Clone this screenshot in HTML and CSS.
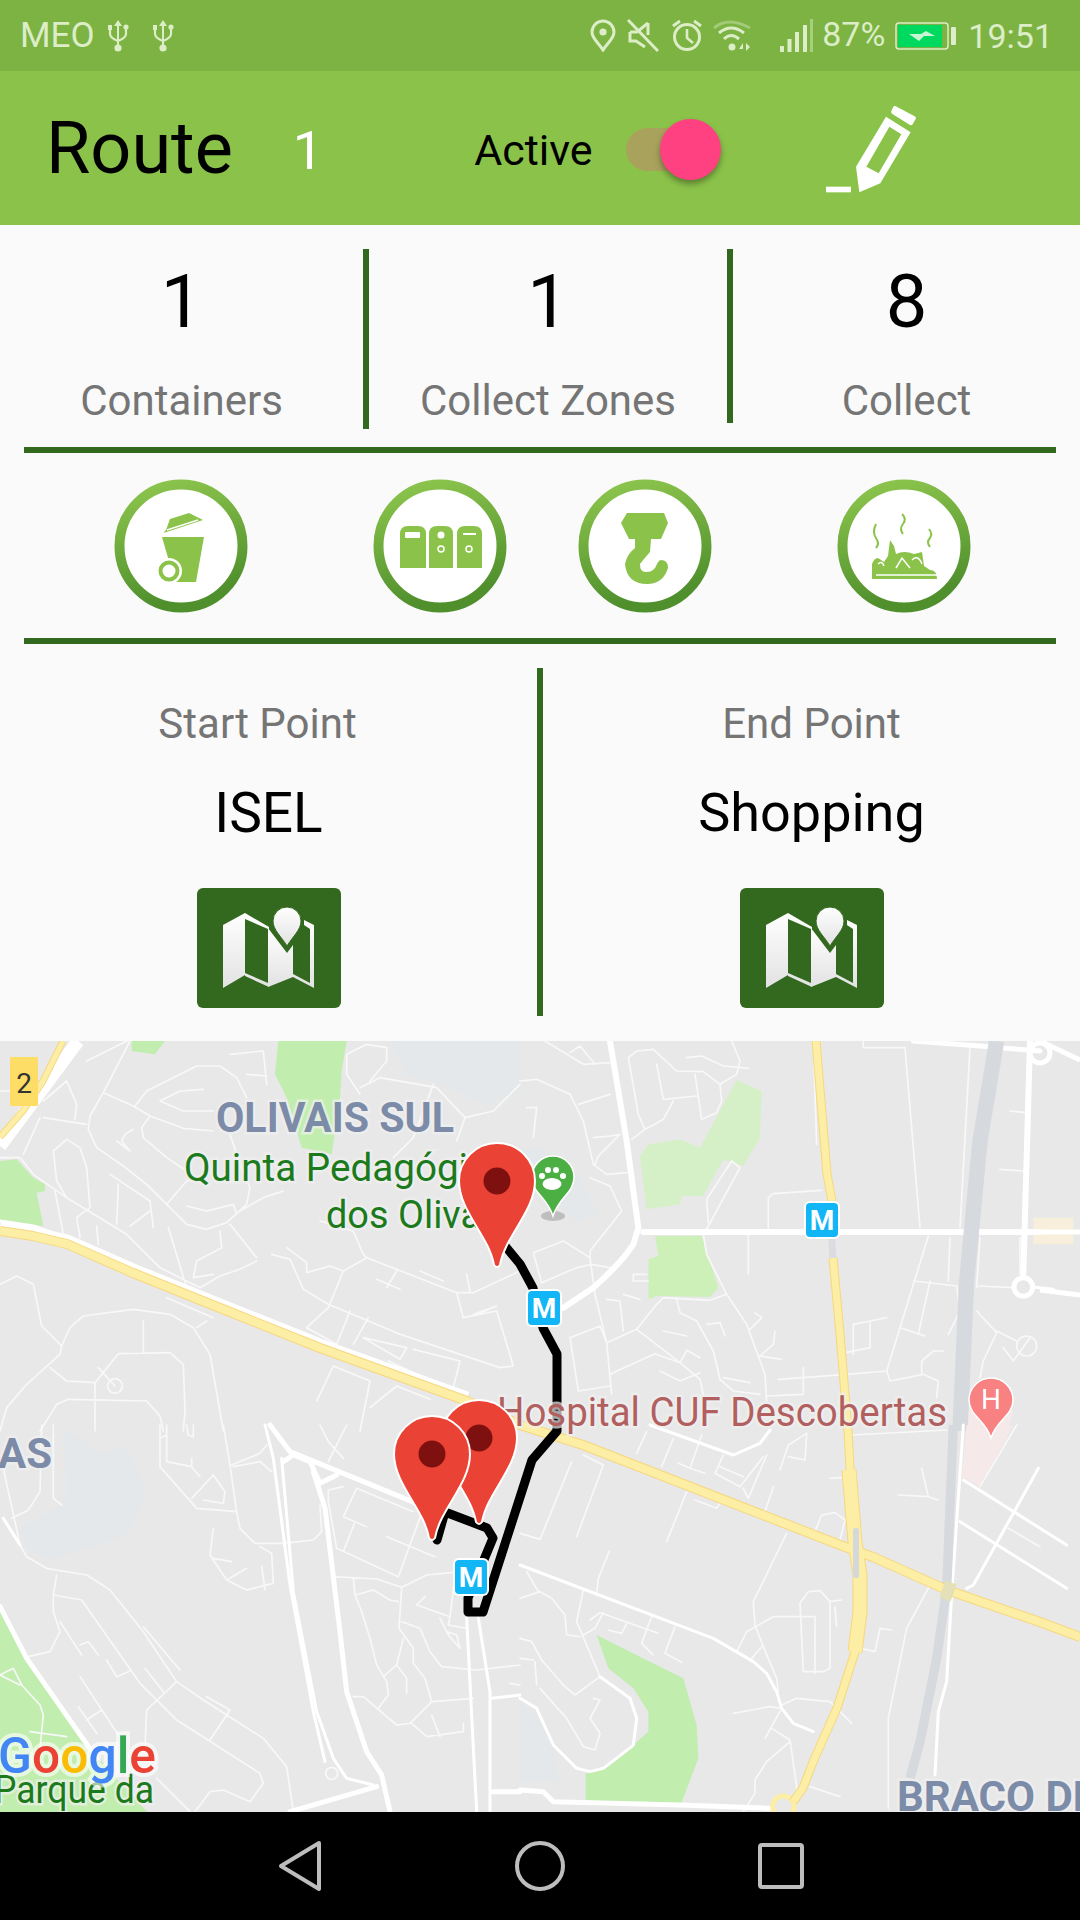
FILE: index.html
```html
<!DOCTYPE html>
<html lang="en">
<head>
<meta charset="utf-8">
<title>Route</title>
<link rel="stylesheet" href="styles.css">
</head>
<body>
<svg class="defs" width="0" height="0" aria-hidden="true">
  <defs>
    <linearGradient id="ring" x1="0" y1="0" x2="0.25" y2="1">
      <stop offset="0" stop-color="#8fc74e"/>
      <stop offset="1" stop-color="#4f8f2c"/>
    </linearGradient>
    <linearGradient id="paper" x1="0" y1="0" x2="0" y2="1">
      <stop offset="0" stop-color="#ffffff"/>
      <stop offset="1" stop-color="#e2e2e2"/>
    </linearGradient>
    <symbol id="usb" viewBox="0 0 24 34">
      <path d="M12 1l4 6h-3v19h-2V7H8z" fill="currentColor"/>
      <circle cx="12" cy="29" r="3.6" fill="currentColor"/>
      <path d="M4 8v7q0 4 8 7q8-3 8-7V8" fill="none" stroke="currentColor" stroke-width="2.2"/>
      <rect x="2" y="6" width="4" height="5" fill="currentColor"/>
      <circle cx="20" cy="8" r="2.6" fill="currentColor"/>
    </symbol>
    <symbol id="map-icon" viewBox="0 0 144 120">
      <path fill="url(#paper)" d="M26 37L48 25V87L26 100Z"/>
      <path fill="url(#paper)" d="M48 25L72 39V99L48 88Z"/>
      <path fill="#33691e" d="M48 31L71 41V95L48 85Z"/>
      <path fill="url(#paper)" d="M71 40L90 65L96 57V89L71 99Z"/>
      <path fill="url(#paper)" d="M107 32L117 37V100L96 89V86L113 95V41L107 37Z"/>
      <path fill="url(#paper)" d="M90 19A14 14 0 0 1 104 33C104 42 96 48 90 58C84 48 76 42 76 33A14 14 0 0 1 90 19Z" stroke="#33691e" stroke-width="1"/>
    </symbol>
    <g id="pin">
      <path d="M0-38C21-38 38-21 38 0C38 30 8 55 3 84Q0 88-3 84C-8 55-38 30-38 0C-38-21-21-38 0-38Z" fill="#ea4335" stroke="#fff" stroke-width="2"/>
      <circle r="13.5" fill="#7f1010"/>
    </g>
    <g id="metro">
      <rect x="-18" y="-19" width="36" height="38" rx="6" fill="#fff"/>
      <rect x="-16" y="-17" width="32" height="34" rx="4" fill="#12b5f5"/>
      <text class="metro-label" y="10" text-anchor="middle">M</text>
    </g>
  </defs>
</svg>

<div class="screen">
  <div class="status">
    <span class="status-text meo">MEO</span>
    <svg class="usb usb-first"><use href="#usb"/></svg>
    <svg class="usb usb-second"><use href="#usb"/></svg>
    <span class="status-spacer"></span>
    <svg class="s-icon s-loc" viewBox="0 0 26 33"><path d="M13 2a11 11 0 0 1 11 11c0 7-7 11-11 18C9 24 2 20 2 13A11 11 0 0 1 13 2Z" fill="none" stroke="currentColor" stroke-width="3"/><circle cx="13" cy="13" r="3.600" fill="currentColor"/></svg>
    <svg class="s-icon s-mute" viewBox="0 0 32 33"><path d="M3 13h7L21 4M3 13v9h6l9 6" fill="none" stroke="currentColor" stroke-width="3"/><path d="M21 4v12" stroke="currentColor" stroke-width="3"/><path d="M1 1l30 31" stroke="currentColor" stroke-width="3"/></svg>
    <svg class="s-icon s-alarm" viewBox="0 0 32 33"><circle cx="16" cy="18" r="12.500" fill="none" stroke="currentColor" stroke-width="3"/><path d="M16 10v9l6 5" fill="none" stroke="currentColor" stroke-width="2.600"/><path d="M2 7l7-5M30 7l-7-5" stroke="currentColor" stroke-width="3"/></svg>
    <svg class="s-icon s-wifi" viewBox="0 0 39 33"><path d="M1 9Q15-3 37 9" fill="none" stroke="currentColor" stroke-width="3" opacity=".4"/><path d="M6 14Q18 4 31 14" fill="none" stroke="currentColor" stroke-width="3"/><path d="M11 20Q18 13 26 20" fill="none" stroke="currentColor" stroke-width="3"/><circle cx="19" cy="28" r="3.500" fill="currentColor"/><path d="M30 24l-4 6h4ZM33 24v8l4-4Z" fill="currentColor"/></svg>
    <svg class="s-icon s-signal" viewBox="0 0 33 33"><path d="M0 27h4v6H0ZM7.500 20h4v13h-4ZM15 13h4v20h-4ZM23 6h4v27h-4Z" fill="currentColor"/><path d="M30 0h3v33h-3Z" fill="currentColor" opacity=".45"/></svg>
    <span class="status-text pct">87%</span>
    <svg class="s-icon s-batt" viewBox="0 0 61 28"><rect x="1" y="1" width="52" height="26" rx="3" fill="none" stroke="currentColor" stroke-width="1.500"/><rect x="3" y="3" width="44" height="22" fill="#00d95f"/><rect x="56" y="5" width="5" height="18" rx="1" fill="currentColor"/><path d="M14 12h12l5-3l9 5H29l-5 5Z" fill="#c6f6d4"/></svg>
    <span class="status-text time">19:51</span>
  </div>

  <header class="appbar">
    <h1 class="title">Route</h1>
    <span class="route-no">1</span>
    <span class="active-label">Active</span>
    <span class="switch"><span class="thumb"></span></span>
    <svg class="pencil" viewBox="0 0 360 330">
      <path d="M42 275H117V292H42Z" fill="#fff"/>
      <path fill="#fff" fill-rule="evenodd" d="M222 65L296 112L205 265L142 292L132 215ZM232 95L163 215L200 235L268 118Z"/>
      <path fill="#fff" d="M250 33L308 64Q314 68 311 72L302 88Q298 92 294 90L240 56Q236 52 238 48L244 35Q246 32 250 33Z"/>
    </svg>
  </header>

  <section class="stats">
    <div class="stat">
      <div class="stat-value">1</div>
      <div class="stat-label">Containers</div>
    </div>
    <div class="vline vline-a"></div>
    <div class="stat">
      <div class="stat-value">1</div>
      <div class="stat-label">Collect Zones</div>
    </div>
    <div class="vline vline-b"></div>
    <div class="stat">
      <div class="stat-value">8</div>
      <div class="stat-label">Collect</div>
    </div>
  </section>

  <div class="rule"></div>

  <section class="actions">
    <svg class="round round-bin" viewBox="-67 -67 134 134">
      <circle r="61.500" fill="#fff" stroke="url(#ring)" stroke-width="10"/>
      <path fill="#8bc34a" d="M-17.500-13L22-26L8-33L-11-27L-15-16Z"/>
      <path stroke="#fff" stroke-width="1.500" d="M-14-16L17-26"/>
      <path fill="#8bc34a" d="M-19-9H23L15 36H-6Z"/>
      <circle cx="-12" cy="25" r="13" fill="#fff"/>
      <circle cx="-12" cy="25" r="8.500" fill="none" stroke="#8bc34a" stroke-width="4"/>
    </svg>
    <svg class="round round-recycle" viewBox="-67 -67 134 134">
      <circle r="61.500" fill="#fff" stroke="url(#ring)" stroke-width="10"/>
      <path fill="#8bc34a" d="M-40 22V-12Q-40-20-32-20H-22Q-14-20-14-12V22Z"/>
      <path fill="#8bc34a" d="M-11 22V-12Q-11-20-3-20H5Q13-20 13-12V22Z"/>
      <path fill="#8bc34a" d="M17 22V-12Q17-20 25-20H34Q42-20 42-12V22Z"/>
      <rect x="-35" y="-14" width="15" height="6" rx="1" fill="#fff"/>
      <ellipse cx="1" cy="-11" rx="3.500" ry="3.500" fill="#fff"/>
      <rect x="23" y="-13" width="13" height="2" fill="#fff"/>
      <circle cx="1" cy="3" r="3" fill="none" stroke="#fff" stroke-width="1.500"/>
      <circle cx="29" cy="3" r="3" fill="none" stroke="#fff" stroke-width="1.500"/>
    </svg>
    <svg class="round round-hook" viewBox="-67 -67 134 134">
      <circle r="61.500" fill="#fff" stroke="url(#ring)" stroke-width="10"/>
      <path fill="#8bc34a" d="M-18-33H19L23-23L16-7H-16L-24-23Z"/>
      <path fill="#8bc34a" d="M-10-7H6L5 6Q-2 14-5 18Q-5 27 2 26Q9 26 12 18Q14 14 16 14Q23 14 23 22Q18 38 2 38Q-18 38-20 18Q-18 8-10 2Z"/>
    </svg>
    <svg class="round round-heap" viewBox="-67 -67 134 134">
      <circle r="61.500" fill="#fff" stroke="url(#ring)" stroke-width="10"/>
      <path fill="#8bc34a" d="M-32 33V18Q-30 12-26 12L-20 16L-16 10L-14-6L-10 0L-8 8Q0 4 10 8L18 6L20 20L26 24Q33 24 33 33Z"/>
      <path fill="none" stroke="#fff" stroke-width="1.500" d="M-26 18Q-22 14-20 20M-8 22L-2 12L6 22M8 14Q14 8 18 18M-28 29H33"/>
      <path fill="none" stroke="#8bc34a" stroke-width="2" d="M-28-22Q-32-14-28-8Q-24-2-28 2M-2-32Q3-27-1-22Q-5-17-1-12M25-17Q29-12 26-8Q22-4 26 1"/>
    </svg>
  </section>

  <div class="rule"></div>

  <section class="points">
    <div class="point">
      <div class="point-label point-label-start">Start Point</div>
      <div class="point-value">ISEL</div>
      <button class="map-btn" type="button"><svg class="map-svg"><use href="#map-icon"/></svg></button>
    </div>
    <div class="vline vline-c"></div>
    <div class="point">
      <div class="point-label">End Point</div>
      <div class="point-value point-value-end">Shopping</div>
      <button class="map-btn" type="button"><svg class="map-svg"><use href="#map-icon"/></svg></button>
    </div>
  </section>

  <svg class="map" viewBox="0 1041 1080 771" preserveAspectRatio="none">
    <rect x="0" y="1041" width="1080" height="771" fill="#e8e8e8"/>

    <!-- north-west quarter -->
    <g transform="translate(0 1041) scale(.33333)">
      <path class="park" d="M395 0H495L465 40L395 30ZM835 0H1040L1025 90L1020 170L995 340L905 320L860 170L825 100ZM0 360L50 355L100 410L135 430V450L110 455L130 555L0 540Z"/>
      <path class="water" d="M1170 0H1560V150L1460 190L1330 135L1220 100Z"/>
      <path class="m5" d="M390 0L310 155L270 225L265 265L290 320L370 375L440 430L520 510L560 550L620 565L680 545L740 490L750 440L720 370L690 280M310 155L400 195L450 225L550 262L640 270M405 195L440 150L590 75L660 75L710 110L740 170M450 225L425 260L430 290L500 350L560 390M480 180L540 150L610 145M480 180L550 210L640 210M0 350L60 350L100 400L200 470L380 580L480 680L600 740L660 705L720 685L770 660M200 470L170 420L160 330L200 295L240 320L260 380L270 500L230 530M165 450L190 580M230 530L240 590M290 555L295 610M0 730L50 705L100 730L125 855L185 915L180 940L80 1030L20 1100L0 1170M185 915L210 860L250 825L400 805L510 820L580 860L630 940L670 1170M150 980L200 1020L285 1025L355 938L510 935L550 970L555 1110L550 1170M430 840V935M120 1170L170 1090L205 1075L440 1080L480 1125L490 1170M295 980L345 1035M285 1025V1170M1100 650L1370 755L1420 755L1560 690M1100 650L1030 690L985 800L920 860L1010 910M815 640L870 655L910 745L985 790L1200 880L1500 980L1540 975L1490 810L1390 830L1370 755M960 540L1060 570L1090 640L1100 650M1010 910L1050 810M1060 910L1105 830M1090 890L1220 920L1200 955L1090 890M1165 960L1380 1060M1240 925L1380 960L1360 1040M950 1080L1000 975L1110 1020L1080 1170M1110 1100L1190 1035L1290 1075M1080 140L1140 110L1310 140L1395 230L1370 300M1395 230L1480 210L1560 130M1080 160L1040 100L1040 40L1100 10L1160 20L1160 60L1110 120M690 40L790 30L800 130M740 100L800 105M500 490L560 420L620 410M560 495L620 510L700 490L710 520M505 560L560 740M660 570L665 620L590 660L580 710L640 700M690 550L770 650M860 620L920 665L920 695L990 675L1030 690M850 450L790 470L720 510M0 150H110M130 230L260 250M120 230L70 340M130 180L200 120L230 190L225 235M260 60L340 20L380 0M350 300L390 330L365 300L375 280L400 265M330 400L450 480L460 560M355 430L350 550M390 555L450 510M1130 715L1200 745M1190 690L1160 740M1260 690L1330 720M1420 825L1490 795L1420 820M1300 130L1240 290L1180 350M500 770L640 830M1400 700L1410 750M590 860L620 840"/>
      <circle class="m5" cx="345" cy="1035" r="22"/>
      <path class="m9" d="M0 540L100 555L280 620"/>
    </g>

    <!-- north-east quarter -->
    <g transform="translate(520 1041) scale(.33333)">
      <path class="park-pale" d="M650 118L725 150L720 290L670 375L610 355L550 465L485 465L480 490L380 505L360 345L385 310L480 295L540 320Z"/>
      <path class="park-mid" d="M405 585H545L595 740L570 768L410 765L385 775V655L415 645Z"/>
      <rect x="1540" y="530" width="120" height="80" fill="#f7efdc"/>
      <path class="water" d="M0 330L60 320L170 400L235 510L170 545L120 500L130 440Z"/>
      <path class="pink" d="M1340 1110H1480L1460 1170H1330Z"/>
      <path class="m5" d="M75 0L190 70L270 65M150 35L180 15L225 70M0 120L50 115L150 160L190 240L220 370L260 400L320 395M175 190L270 160M325 50L350 30L400 25L470 90L550 92L600 130L650 100L660 60L635 0M325 50L355 220L375 265L335 295M600 130L605 180L590 215L545 235L525 100M410 70L430 175L530 165M460 180L430 235L405 250L375 265M500 50L545 45L610 75L685 82M210 410L270 435L305 510L210 630L210 650L130 600L40 635L65 725L170 680L215 670L270 680M210 650L225 760L260 905L275 1060M150 890L240 855L260 905L350 865L410 790L430 770L570 778L620 760M150 890L175 1050L270 1035M350 865L480 965L540 1015L550 1060M270 1000L405 938L480 965L500 928L540 950M470 775L480 815L530 840L580 930L600 1015L640 1050L720 1060M620 760L560 640L550 580L565 555L660 380L635 360L560 475L565 545M620 760L680 850L735 1000L740 1080M745 565V470L760 458L905 448M685 580V700M1225 585L1100 990L980 1000L775 1015M850 980V1060L740 1065M1100 990L1110 1020L1210 1000L1255 1020L1250 1070M1000 940V850L1050 840L1100 830M1050 840V920L975 935M1140 860L1215 885M1230 720L1195 880M1180 720L1310 735L1320 810L1285 880M1155 20L1200 560M1030 0V20L1155 20M1350 20L1320 560M1380 590L1370 740M1375 735L1480 740M1500 590V700M1370 810L1430 875L1390 960L1380 1010M1430 870L1490 900M1450 920L1480 960L1530 890M1205 1000L1205 960L1240 930L1270 930M1470 210L1520 215M1440 385L1510 390M1290 590L1285 720M310 760L360 775M260 775L300 780L310 870M880 0L890 310M220 290L270 285L300 280L235 345L225 370M20 200L50 200L40 290M340 700H380M340 700V720H385M560 850L600 845L615 885M430 870L500 885M420 990L480 1020L540 995M610 1010L690 1025M705 815L725 830L690 865M765 870L760 910L720 945L785 955"/>
      <circle class="m5" cx="1520" cy="915" r="30"/>
      <path class="m18" d="M270 0L320 300L355 560L340 610Q300 670 220 740L130 800"/>
      <path class="m18" d="M370 573H1560"/>
      <path class="m18" d="M1530 0L1510 700"/>
      <path class="m15" d="M1180 0L1380 15L1560 30"/>
      <circle class="m15" cx="1510" cy="738" r="28"/>
      <path class="m9" d="M1535 738L1600 745"/>
      <path class="rail" d="M1430 0L1380 300L1340 720L1320 1170" stroke-width="46"/>
    </g>

    <!-- south-west quarter -->
    <g transform="translate(0 1425) scale(.33333)">
      <path class="park" d="M0 540L90 710L280 980L330 1040L450 1170H0Z"/>
      <path class="water" d="M190 10L320 90L360 60L395 90L440 210L380 330L230 380L150 405L80 370L60 310L180 240L200 200Z"/>
      <path class="m5" d="M125 0L120 200L85 255L35 280M10 130L60 360L80 395L140 430L260 450L330 495L430 620L530 770L610 825L790 940L860 1025L880 1160M170 450L160 510L245 525L420 775L530 885L780 1045L790 1075L750 1130L670 1095L630 1100L585 1160M160 510V560L180 620L150 680L85 695M180 590L245 690M240 660L265 650L295 690M320 705L350 755L390 738M240 755L355 930M235 845L290 925M260 885L305 855M430 605L540 735M530 770L440 855L435 965M435 730L490 800M620 815L690 855L630 945M480 0V125L590 250L710 260L690 120L670 0M500 0V110L575 125M575 100V125L600 155M640 150L575 220M640 150L675 200L670 235L610 225M640 310L630 390L680 465L740 495L820 475L815 385L780 365M640 400L695 410M680 465L740 430M785 425L795 495M700 125L780 110L815 140M695 120L780 85L800 60M710 260L720 310L765 355L850 355L940 345L965 320L960 240M1000 455L1130 462L1205 487L1280 450L1360 442M1205 487L1197 610L1240 670V715L1275 760L1295 830L1230 895L1190 900L1090 815L1060 815M1295 830L1420 820M1030 185L985 195V230L1010 370L1195 455L1270 250M1070 190L1030 275L1100 305M1065 290L1030 380M1160 335L1305 395M1070 190L1240 260M1060 460L1065 510L1085 560L1110 640L1130 720L1160 770L1165 810L1135 850M1065 510L1120 495L1170 525L1195 530M1190 720L1210 640M1150 755L1190 720L1220 760V805M1250 540L1350 575L1370 410M1275 515L1250 540M1350 575L1345 600L1400 610M1205 590L1260 610L1290 680L1325 725L1430 735L1560 720M1320 580L1345 630L1380 670L1370 630L1340 620M1235 895L1280 935L1390 920V895M1295 870L1320 935M0 750L40 730L65 780L120 840L130 870L120 970M0 750L60 780M90 920L200 935M470 1060L570 1160M1530 775L1560 780M160 0V220L185 240M500 30L480 40M560 0L565 30L580 35V0M1040 0L985 110M960 0L985 50L1030 100"/>
      <circle class="m5" cx="995" cy="1045" r="18"/>
      <path class="m9" d="M795 0L820 100L870 480L940 860L975 1010M845 100L880 500L950 860L1000 1000L1040 1060L1120 1080M1400 580L1430 1160M1435 580L1470 800V1160M1475 820L1560 810M10 280L60 360"/>
      <path class="m15" d="M810 0L870 80L1250 235M850 110L880 90L930 110L960 175L1010 150M940 140L975 250L1020 620L1040 800L1100 980L1145 1050L1170 1160M0 545L80 700L290 1000M870 1160L1130 1085M1480 1100H1560"/>
    </g>

    <!-- south-east quarter -->
    <g transform="translate(520 1425) scale(.33333)">
      <path class="park" d="M230 630L360 695L490 760L530 900L535 1000L480 1145L197 1140V1045L240 1035L335 965L385 920V860L340 790L265 730Z"/>
      <path class="water" d="M0 830L40 860L100 960L115 1070H0Z"/>
      <path class="pink" d="M1340 0H1480L1380 185L1325 155Z"/>
      <path class="m5" d="M800 325L700 530L705 600L730 665L770 760L775 800M785 840L830 820L930 830L995 895M640 865L750 845L785 850M785 850L735 940M755 910L810 945L835 1120M810 950L740 1010L705 1065V1105L670 1160M870 1085L960 1115M650 680L680 620L760 575H885V745M840 535L865 500L900 497L930 530V730L910 740H850L840 535M930 530L965 525M945 545L950 605M730 660L695 700M905 270L945 263L975 285L960 345M905 270L885 320M1020 670L1065 680L1080 610L1115 615M1230 480L1160 610L1105 880V1150M0 325L60 343L155 110M250 120L170 335M268 378L235 460L230 505M190 495L170 590L240 755L165 810L130 780L65 705L35 650L0 640M190 90L250 120M525 225L590 250L605 225M500 200L440 350M0 520L60 500L95 520L135 570L140 630L180 635M20 440L55 500M250 563L225 610L190 630M210 585L240 563L415 625M395 575L365 655L400 690M465 605L435 685L485 712M320 595L305 625L265 615M60 790L140 880L190 965L225 975L240 925L210 880L240 825L220 820M380 20L350 85M460 40L425 125M545 30L510 130L475 115M510 130L555 145M610 90L585 145L660 185L730 95M670 190L685 220L740 90M600 125L670 155M860 25L805 60L780 135M860 25L855 105L805 95M760 185L735 260M995 30L1280 15M1135 210L1225 215L1255 225M1205 130L1225 215M930 160L970 157M1465 310L1560 365M1490 0L1380 185M0 700L40 705M45 710L50 780"/>
      <path class="m9" d="M0 420L580 640L700 710L740 745L770 800L785 850L820 895L880 920M390 0L640 90L720 55L750 15M240 755L330 820L350 880L340 960M0 820L50 850L100 960L170 1030L210 1040L250 1030L335 965M1330 165L1640 360M1320 290L1640 490M1555 130L1360 480L1340 490M1330 0L1310 290L1295 510L1280 770L1255 860L1245 1050"/>
      <path class="m15" d="M0 1095L70 1100L100 1130L480 1140L750 1150"/>
      <path class="rail" d="M1300 0L1280 490L1250 700L1200 950L1170 1060" stroke-width="28"/>
      <circle class="yellow-ring" cx="790" cy="1145" r="32"/>
    </g>

    <!-- far right strip -->
    <g class="m-strip">
      <path d="M1040 1041L1080 1060M1040 1232H1080M1040 1290L1080 1295"/>
      <circle cx="1040" cy="1053" r="10"/>
    </g>

    <!-- motorways -->
    <g class="motorways">
      <path class="m-white" d="M0 1146L78 1041"/>
      <path class="m-white" d="M0 1228L33 1233L67 1241L133 1270L220 1305L320 1345L467 1398"/>
      <path class="edge edge-n" d="M0 1137L23 1111L43 1081L63 1041"/>
      <path class="fill fill-n" d="M0 1137L23 1111L43 1081L63 1041"/>
      <path class="edge edge-h" d="M0 1231L33 1236L67 1244L133 1273L220 1308L320 1348L467 1401L520 1425L583 1445L840 1545L873 1557L947 1590L1040 1622L1080 1637"/>
      <path class="edge edge-v" d="M816 1041L827 1174L832 1201M833 1258L840 1334L848 1431L850 1468L855 1542L860 1575V1612L855 1652L837 1708L813 1762L803 1788L793 1802"/>
      <path class="edge edge-w" d="M849 1470L855 1542L860 1575V1612L855 1652"/>
      <path class="fill fill-h" d="M0 1231L33 1236L67 1244L133 1273L220 1308L320 1348L467 1401L520 1425L583 1445L840 1545L873 1557L947 1590L1040 1622L1080 1637"/>
      <path class="fill fill-v" d="M816 1041L827 1174L832 1201M833 1258L840 1334L848 1431L850 1468L855 1542L860 1575V1612L855 1652L837 1708L813 1762L803 1788L793 1802"/>
      <path class="fill fill-w" d="M849 1470L855 1542L860 1575V1612L855 1652"/>
      <rect x="853" y="1528" width="6" height="50" rx="2" fill="#d5d8db"/>
      <path d="M829 1201L833 1258" stroke="#dadcdf" stroke-width="7" fill="none"/>
      <rect x="942" y="1582" width="12" height="18" fill="#e4e0b8" transform="rotate(20 948 1591)"/>
    </g>

    <path class="route" d="M506 1247L520 1264L533 1288L543 1328L557 1354V1431L532 1460L483 1612H468V1598L493 1538L487 1528L445 1512L437 1540"/>

    <g class="label-group">
      <text class="label-place" x="216" y="1132" textLength="238" lengthAdjust="spacingAndGlyphs">OLIVAIS SUL</text>
      <text class="label-park" x="184" y="1181" textLength="284" lengthAdjust="spacingAndGlyphs">Quinta Pedagógi</text>
      <text class="label-park" x="326" y="1228" textLength="155" lengthAdjust="spacingAndGlyphs">dos Oliva</text>
      <text class="label-hospital" x="497" y="1426" textLength="450" lengthAdjust="spacingAndGlyphs">Hospital CUF Descobertas</text>
      <text class="label-place" x="-2" y="1468">AS</text>
      <text class="label-place" x="897" y="1811">BRACO DE</text>
      <text class="label-park" x="-6" y="1803" textLength="160" lengthAdjust="spacingAndGlyphs">Parque da</text>
    </g>

    <rect x="10" y="1057" width="28" height="49" rx="1" fill="#fedd67"/>
    <text class="road-no" x="24" y="1093" text-anchor="middle">2</text>

    <ellipse cx="553" cy="1216" rx="12" ry="5" fill="#000" opacity=".18"/>
    <path d="M553 1156a21 21 0 0 1 21 21c0 16-15 20-21 39c-6-19-21-23-21-39a21 21 0 0 1 21-21Z" fill="#4caf43" stroke="#fff" stroke-width="1.500"/>
    <g fill="#fff">
      <ellipse cx="552" cy="1184" rx="9.500" ry="6"/>
      <circle cx="542" cy="1176" r="3"/>
      <circle cx="548" cy="1170" r="3"/>
      <circle cx="556" cy="1170" r="3"/>
      <circle cx="563" cy="1176" r="3"/>
    </g>

    <path d="M991 1378a22 22 0 0 1 22 22c0 16-17 20-22 38c-5-18-22-22-22-38a22 22 0 0 1 22-22Z" fill="#f88181" stroke="#fff" stroke-width="1.500"/>
    <text class="hosp-h" x="991" y="1409" text-anchor="middle">H</text>

    <use href="#metro" x="544" y="1308"/>
    <use href="#metro" x="822" y="1220"/>
    <use href="#metro" x="471" y="1577"/>

    <use href="#pin" x="497" y="1181"/>
    <use href="#pin" x="479" y="1438"/>
    <use href="#pin" x="432" y="1454"/>

    <text class="google" x="-2" y="1773" textLength="158" lengthAdjust="spacingAndGlyphs"><tspan fill="#4285f4">G</tspan><tspan fill="#ea4335">o</tspan><tspan fill="#fbbc05">o</tspan><tspan fill="#4285f4">g</tspan><tspan fill="#34a853">l</tspan><tspan fill="#ea4335">e</tspan></text>
  </svg>

  <nav class="navbar">
    <svg class="nav-icon nav-back" viewBox="0 0 44 52"><path d="M41 3L3 26L41 49Z" fill="none" stroke="#bdbdbd" stroke-width="4" stroke-linejoin="round"/></svg>
    <svg class="nav-icon nav-home" viewBox="0 0 52 52"><circle cx="26" cy="26" r="23" fill="none" stroke="#bdbdbd" stroke-width="4"/></svg>
    <svg class="nav-icon nav-recent" viewBox="0 0 46 46"><rect x="2" y="2" width="42" height="42" rx="2" fill="none" stroke="#bdbdbd" stroke-width="4"/></svg>
  </nav>
</div>
</body>
</html>
```

FILE: styles.css
```css
* { box-sizing: border-box; }

html, body {
  margin: 0;
  padding: 0;
  width: 1080px;
  height: 1920px;
  overflow: hidden;
  background: #fafafa;
  font-family: Roboto, "Liberation Sans", sans-serif;
}

.defs { display: block; height: 0; }

.screen {
  width: 1080px;
  height: 1920px;
  display: flex;
  flex-direction: column;
  background: #fafafa;
}

/* status bar */
.status {
  height: 71px;
  flex: none;
  display: flex;
  align-items: center;
  padding: 0 27px 0 20px;
  background: #7cb342;
  color: #dcedc8;
}
.status-text { font-size: 34px; line-height: 1; }
.meo { font-size: 35px; }
.status-spacer { flex: 1; }
.usb { width: 24px; height: 34px; color: #dcedc8; }
.usb-first { margin-left: 11px; }
.usb-second { margin-left: 21px; }
.s-icon { display: block; color: #dcedc8; }
.s-loc { width: 26px; height: 33px; }
.s-mute { width: 32px; height: 33px; margin-left: 11px; }
.s-alarm { width: 32px; height: 33px; margin-left: 12px; }
.s-wifi { width: 39px; height: 33px; margin-left: 10px; }
.s-signal { width: 33px; height: 33px; margin-left: 28px; }
.pct { margin-left: 9px; transform: translateY(-2px); }
.s-batt { width: 61px; height: 28px; margin-left: 10px; }
.time { margin-left: 12px; }

/* app bar */
.appbar {
  height: 154px;
  flex: none;
  display: flex;
  align-items: center;
  padding-left: 46px;
  background: #8bc34a;
}
.title {
  margin: 2px 0 0;
  font-size: 72px;
  font-weight: 400;
  color: #000;
  line-height: 1;
}
.route-no { margin-left: 60px; margin-top: 6px; font-size: 54px; color: #fff; line-height: 1; }
.active-label { margin-left: 151px; margin-top: 5px; font-size: 43px; color: #000; line-height: 1; }
.switch {
  position: relative;
  margin-left: 33px;
  margin-top: 2px;
  width: 82px;
  height: 43px;
  border-radius: 22px;
  background: #a9a25d;
}
.thumb {
  position: absolute;
  top: -9px;
  right: -13px;
  width: 61px;
  height: 61px;
  border-radius: 50%;
  background: #ff4081;
  box-shadow: 0 4px 6px rgba(0, 0, 0, .35);
}
.pencil { width: 120px; height: 110px; margin-left: 104px; margin-top: 4px; }

/* stats */
.stats {
  height: 222px;
  flex: none;
  display: grid;
  grid-template-columns: 363px 6px 358px 6px 347px;
  padding-top: 24px;
}
.stat { display: flex; flex-direction: column; align-items: center; }
.stat-value { margin-top: 13px; font-size: 74px; line-height: 80px; color: #000; }
.stat-label { margin-top: 35px; font-size: 42px; line-height: 48px; color: #757575; }

.vline { background: #33691e; width: 6px; }
.vline-a { height: 180px; }
.vline-b { height: 174px; }

.rule { height: 6px; flex: none; margin: 0 24px; background: #33691e; }

/* round actions */
.actions {
  height: 185px;
  flex: none;
  display: flex;
  align-items: center;
  padding-left: 114px;
}
.round { width: 134px; height: 134px; display: block; }
.round-recycle { margin-left: 125px; }
.round-hook { margin-left: 71px; }
.round-heap { margin-left: 125px; }

/* start / end points */
.points {
  height: 349px;
  flex: none;
  margin-top: 24px;
  display: grid;
  grid-template-columns: 537px 6px 537px;
}
.point { display: flex; flex-direction: column; align-items: center; }
.point-label { margin-top: 32px; font-size: 42px; line-height: 48px; color: #757575; }
.point-label-start { transform: translateX(-11px); }
.point-value { margin-top: 33px; font-size: 55px; line-height: 64px; color: #000; }
.point-value-end { font-size: 54px; }
.map-btn {
  margin-top: 43px;
  width: 144px;
  height: 120px;
  padding: 0;
  border: 0;
  border-radius: 6px;
  background: #33691e;
}
.map-svg { display: block; width: 144px; height: 120px; }
.vline-c { height: 348px; }

/* map */
.map {
  display: block;
  width: 1080px;
  height: 771px;
  flex: none;
  margin-top: 24px;
}
.park { fill: #c1edae; }
.park-pale { fill: #d5f0c6; }
.park-mid { fill: #cdf0b9; }
.water { fill: #e4e8eb; }
.pink { fill: #f5e9e9; }
.m5, .m9, .m15, .m18 { fill: none; stroke: #fff; stroke-linejoin: round; stroke-linecap: round; }
.m5 { stroke-width: 5; stroke: #f8f8f8; }
.m9 { stroke-width: 9; }
.m15 { stroke-width: 15; }
.m18 { stroke-width: 18; }
.rail { fill: none; stroke: #d6d9dd; stroke-linejoin: round; }
.yellow-ring { fill: none; stroke: #fdeea5; stroke-width: 15; }
.m-strip { fill: none; stroke: #fff; stroke-width: 5; }

.motorways path { fill: none; stroke-linejoin: round; }
.m-white { stroke: #fff; stroke-width: 13; }
.edge { stroke: #f6d77f; }
.fill { stroke: #fdeea5; }
.edge-n { stroke-width: 7; }
.fill-n { stroke-width: 5; }
.edge-h { stroke-width: 10; }
.fill-h { stroke-width: 8; }
.edge-v { stroke-width: 9; }
.fill-v { stroke-width: 7; }
.edge-w { stroke-width: 15; }
.fill-w { stroke-width: 13; }

.route {
  fill: none;
  stroke: #000;
  stroke-width: 9;
  stroke-linejoin: round;
  stroke-linecap: round;
}
.label-group text { paint-order: stroke; stroke: rgba(240, 240, 240, .7); stroke-width: 5px; }
.label-place { font: 700 42px Roboto, sans-serif; fill: #7b8ba8; }
.label-park { font: 400 39px Roboto, sans-serif; fill: #1b7a1b; }
.label-hospital { font: 400 40px Roboto, sans-serif; fill: #b25f5f; }
.road-no { font: 400 28px Roboto, sans-serif; fill: #333; }
.hosp-h { font: 400 28px Roboto, sans-serif; fill: #fff; }
.metro-label { font: 700 28px Roboto, sans-serif; fill: #fff; }
.google {
  font: 500 50px Roboto, sans-serif;
  paint-order: stroke;
  stroke: rgba(255, 255, 255, .6);
  stroke-width: 8px;
}

/* navigation bar */
.navbar {
  height: 108px;
  flex: none;
  background: #000;
  display: flex;
  align-items: center;
  padding-left: 278px;
}
.nav-icon { display: block; }
.nav-back { width: 44px; height: 52px; }
.nav-home { width: 52px; height: 52px; margin-left: 192px; }
.nav-recent { width: 46px; height: 46px; margin-left: 192px; }
```
